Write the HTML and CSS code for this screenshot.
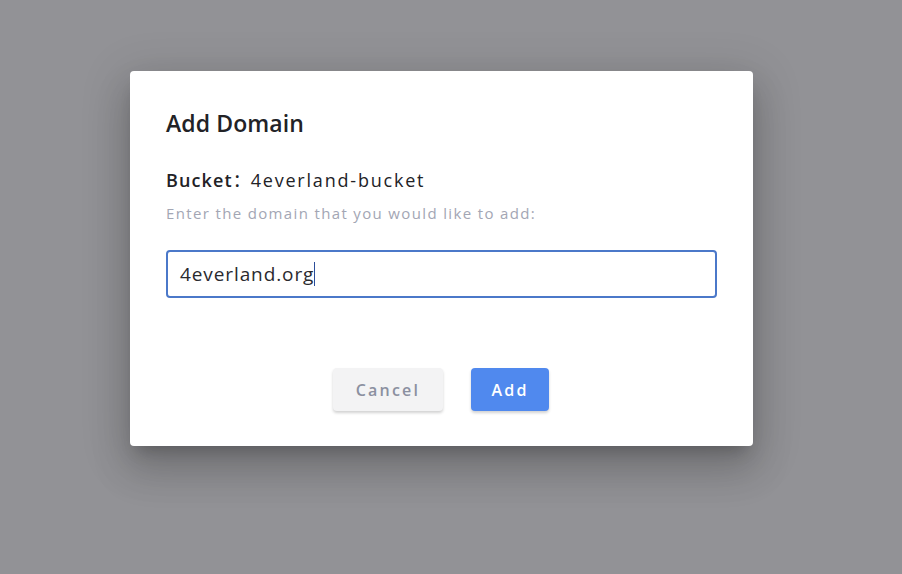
FILE: index.html
```html
<!DOCTYPE html>
<html>
<head>
<meta charset="utf-8">
<link rel="stylesheet" href="styles.css">
</head>
<body>
<div class="overlay">
  <div class="dialog">
    <h2 class="title">Add Domain</h2>
    <div class="bucket"><span class="label">Bucket</span><span class="colon">：</span><span class="value">4everland-bucket</span></div>
    <div class="hint">Enter the domain that you would like to add:</div>
    <div class="input"><span class="input-text">4everland.org</span><span class="caret"></span></div>
    <div class="actions">
      <button class="btn btn-cancel">Cancel</button>
      <button class="btn btn-add">Add</button>
    </div>
  </div>
</div>
</body>
</html>
```

FILE: styles.css
```css
html, body {
  margin: 0;
  padding: 0;
  width: 902px;
  height: 574px;
  overflow: hidden;
}
body {
  font-family: "Open Sans", "DejaVu Sans", sans-serif;
  background: #929296;
}
.overlay {
  width: 902px;
  height: 574px;
  display: flex;
  padding: 71px 0 0 130px;
  box-sizing: border-box;
}
.dialog {
  width: 623px;
  height: 375px;
  box-sizing: border-box;
  background: #fff;
  border-radius: 4px;
  box-shadow: 0 11px 15px -7px rgba(0,0,0,0.2), 0 24px 38px 3px rgba(0,0,0,0.14), 0 9px 46px 8px rgba(0,0,0,0.12);
  padding: 36px 36px 0 36px;
  display: flex;
  flex-direction: column;
}
.title {
  margin: 0;
  font-size: 23px;
  font-weight: 600;
  color: #222226;
  line-height: 32px;
  letter-spacing: 0.1px;
}
.bucket {
  margin-top: 28px;
  font-size: 18px;
  line-height: 24px;
  color: #222226;
  letter-spacing: 1.1px;
}
.label { font-weight: 600; }
.colon {
  font-family: "Noto Sans CJK SC", sans-serif;
  letter-spacing: 0;
}
.value {
  letter-spacing: 1.8px;
  font-weight: 500;
}
.hint {
  margin-top: 11px;
  font-size: 15px;
  line-height: 20px;
  color: #a3a6b4;
  letter-spacing: 1.35px;
}
.input {
  margin-top: 27px;
  height: 48px;
  flex: none;
  box-sizing: border-box;
  border: 2px solid #4b78c9;
  border-radius: 4px;
  padding: 0 12px;
  display: flex;
  align-items: center;
  font-size: 19px;
  font-weight: 500;
  color: #2a2a2e;
  letter-spacing: 0.9px;
}
.caret {
  width: 1px;
  height: 24px;
  background: #2b4d9a;
}
.actions {
  margin-top: 70px;
  margin-left: -1px;
  display: flex;
  justify-content: center;
  gap: 28px;
}
.btn {
  border: none;
  border-radius: 4px;
  height: 43px;
  padding: 0;
  font-family: inherit;
  font-size: 16px;
  font-weight: 600;
  letter-spacing: 2.2px;
  cursor: pointer;
}
.btn-cancel {
  width: 110px;
  background: #f3f3f4;
  color: #8b90a0;
  box-shadow: 0 2px 3px rgba(0,0,0,0.18);
}
.btn-add {
  width: 78px;
  background: #5089ee;
  color: #fff;
  box-shadow: 0 2px 3px rgba(0,0,0,0.18);
}
```
